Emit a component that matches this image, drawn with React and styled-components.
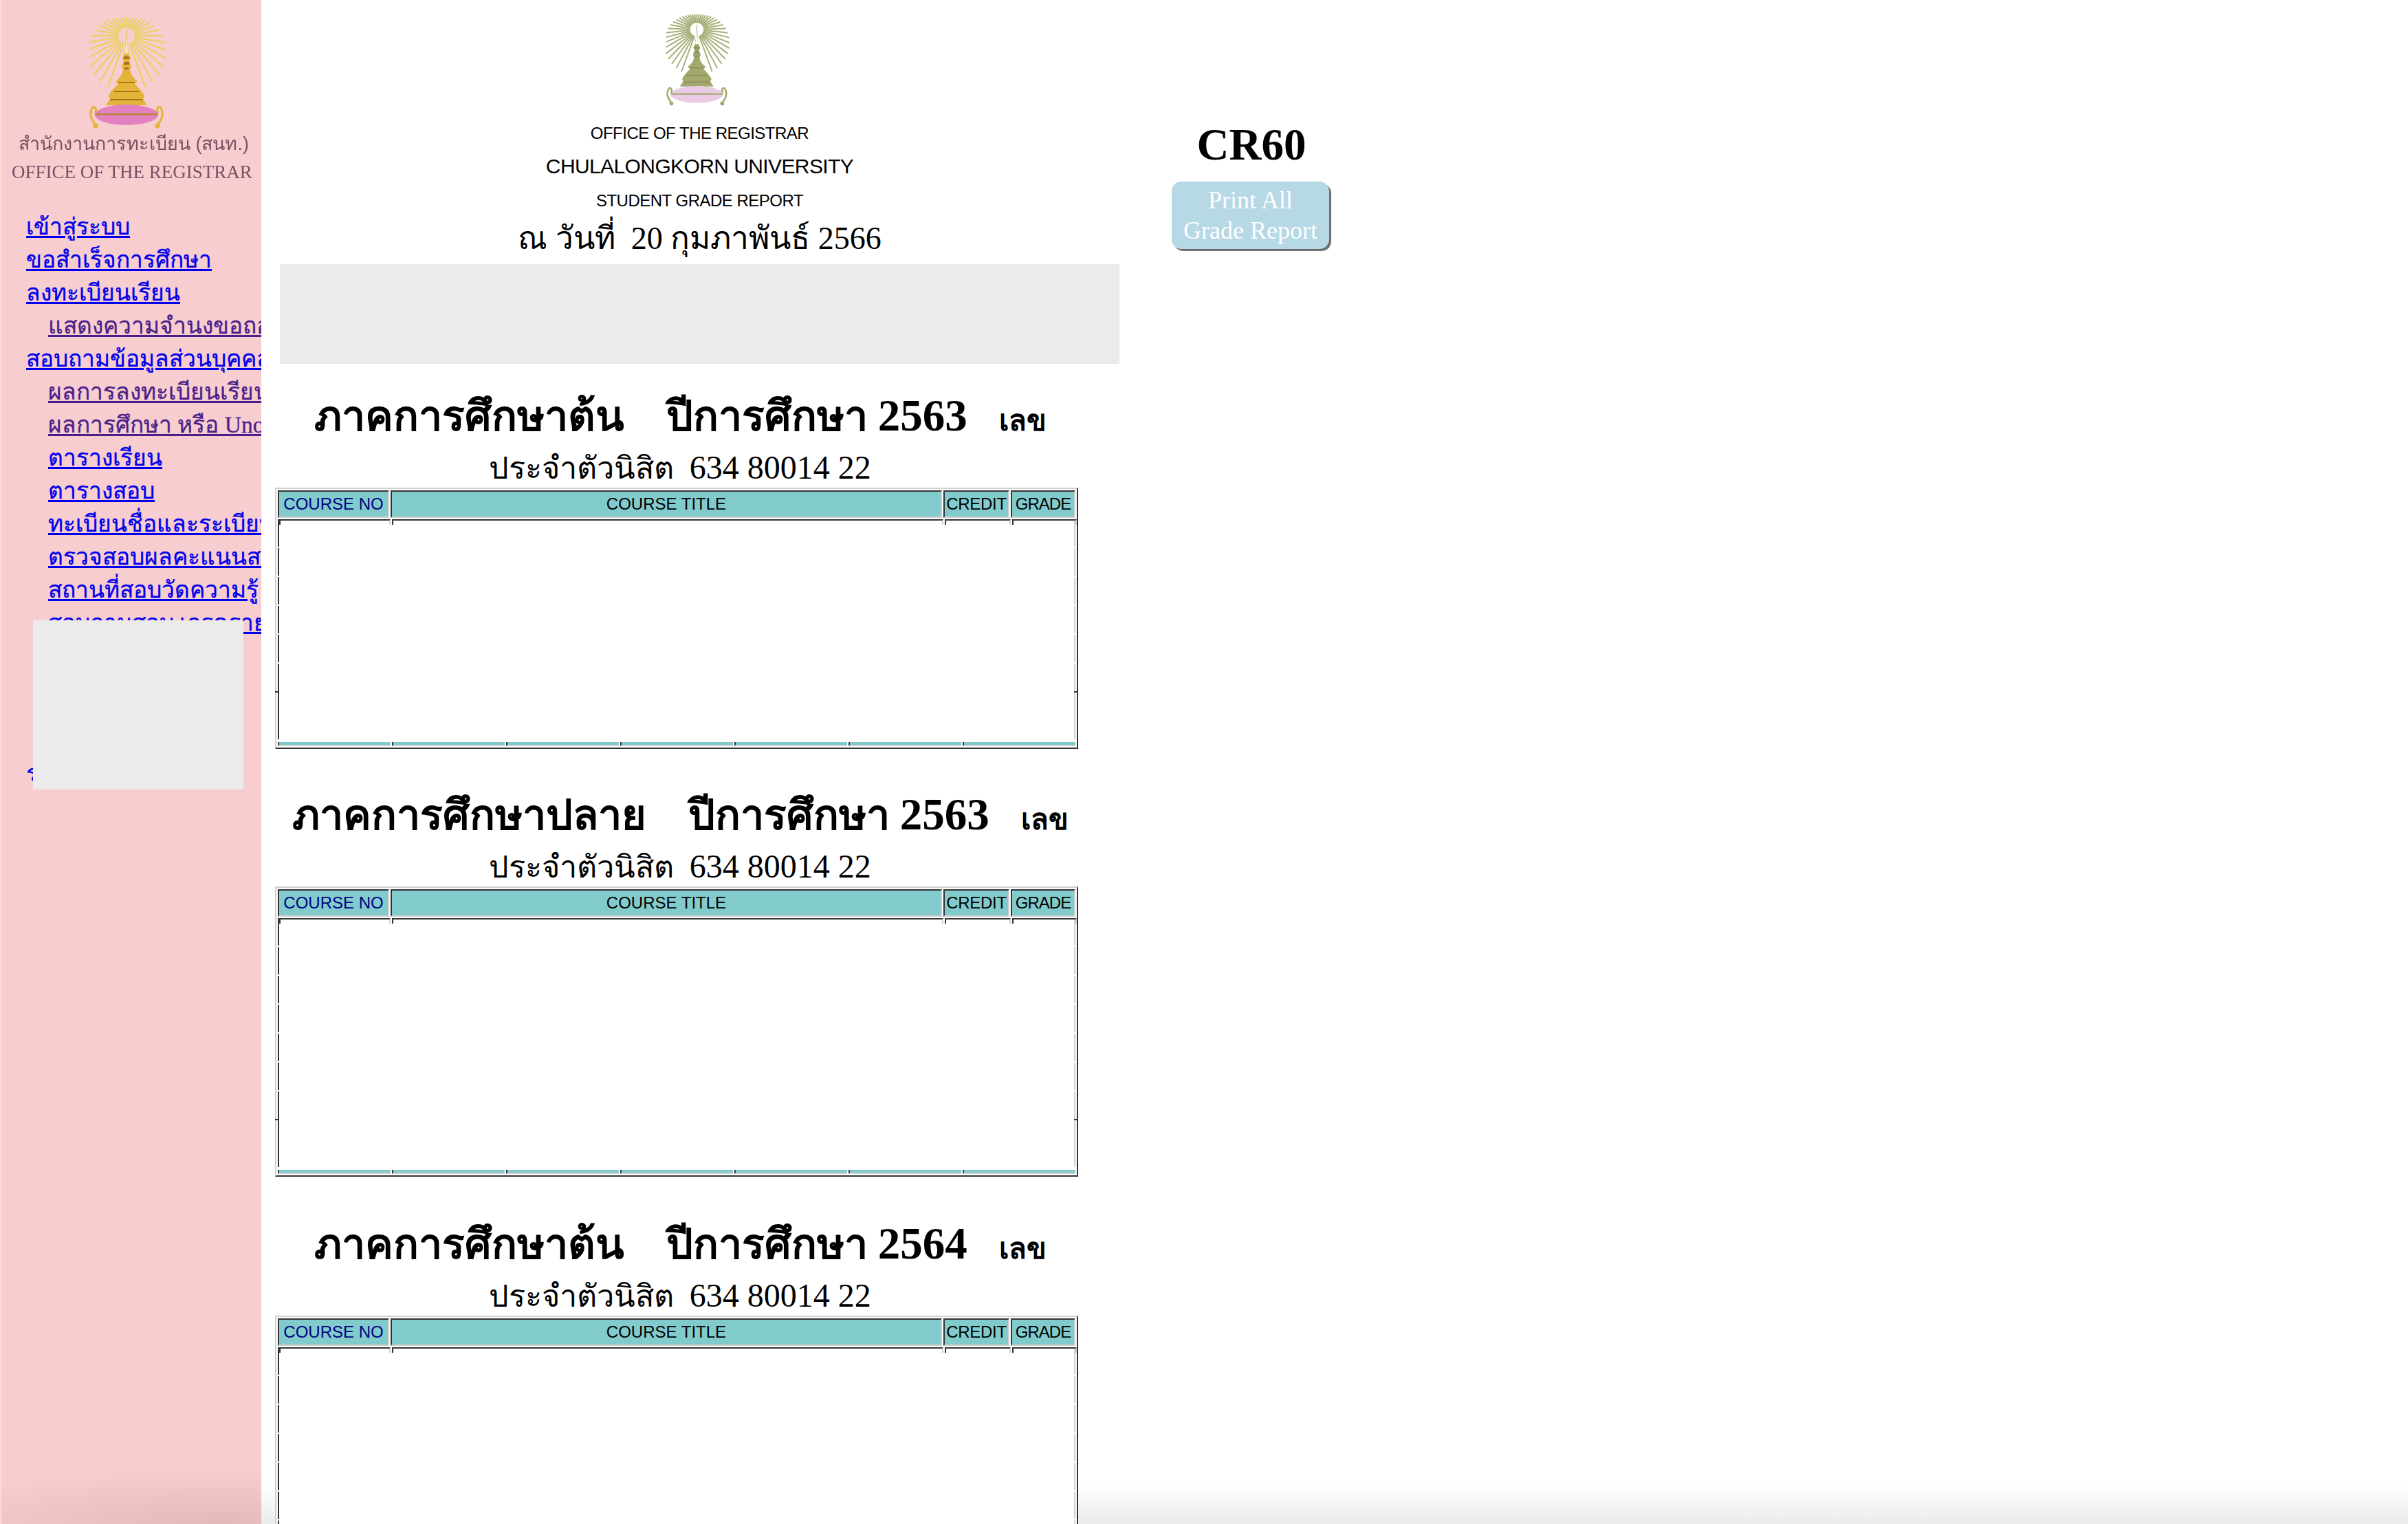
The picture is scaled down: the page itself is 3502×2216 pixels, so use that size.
import * as React from 'react'
import styled, { createGlobalStyle } from 'styled-components'

const serif = '"Liberation Serif", "Noto Sans", serif'
const sans = '"Liberation Sans", "Noto Sans", sans-serif'

const dark = '#333333'
const light = '#d0d0d0'
const teal = '#81cbcd'

const Global = createGlobalStyle`
  html, body {
    margin: 0;
    padding: 0;
    background: #ffffff;
  }
`

const Page = styled.div`
  display: flex;
  width: 3502px;
  height: 2216px;
  overflow: hidden;
  background: linear-gradient(to bottom, #ffffff 2160px, #ebebeb 2216px);
  font-family: ${serif};
  color: #000000;
`

const Sidebar = styled.nav`
  position: relative;
  flex: 0 0 380px;
  box-sizing: border-box;
  height: 2216px;
  overflow: hidden;
  padding-top: 22px;
  border-left: 2px solid #fadcd8;
  background:
    radial-gradient(ellipse 480px 80px at 85% 100%, rgba(120, 70, 70, 0.15), rgba(120, 70, 70, 0) 100%),
    #f7cdcf;
`

const SideLogo = styled.svg`
  display: block;
  width: 112px;
  height: 165px;
  margin-left: 128px;
`

const SideOffice = styled.div`
  margin: 4px 0 0 25px;
  font-size: 27px;
  line-height: 36px;
  font-family: ${sans};
  color: #7c4f63;
  white-space: nowrap;
  filter: blur(0.5px);
`

const SideOfficeEn = styled.div`
  margin: 8px 0 0 15px;
  font-size: 27px;
  line-height: 30px;
  color: #7c4f63;
  white-space: nowrap;
  filter: blur(0.5px);
`

const NavList = styled.div`
  display: flex;
  flex-direction: column;
  margin-top: 41px;
`

const NavLink = styled.a`
  display: block;
  height: 48px;
  padding-left: ${(p) => (p.$sub ? '68px' : '36px')};
  font-size: 33.5px;
  line-height: 48px;
  white-space: nowrap;
  text-decoration: underline;
  -webkit-text-stroke: 0.3px currentColor;
  color: ${(p) => (p.$visited ? '#4b1f8b' : '#0000ee')};
`

const StrayLink = styled.a`
  display: block;
  margin-top: 171px;
  padding-left: 36px;
  font-size: 33.5px;
  line-height: 48px;
  color: #0000ee;
  white-space: nowrap;
`

const SideMask = styled.div`
  position: absolute;
  left: 46px;
  top: 902px;
  width: 306px;
  height: 246px;
  background: #ebebeb;
`

const Report = styled.main`
  flex: 0 0 1320px;
`

const Header = styled.header`
  display: flex;
  flex-direction: column;
  align-items: center;
  width: 1221px;
  margin-left: 27px;
  padding-top: 18px;
`

const CrestWrap = styled.svg`
  display: block;
  width: 92px;
  height: 136px;
  margin-left: -6px;
`

const HeaderLine = styled.div`
  margin-top: ${(p) => p.$top}px;
  font-family: ${sans};
  font-size: ${(p) => p.$size}px;
  line-height: ${(p) => p.$size + 4}px;
  letter-spacing: ${(p) => p.$track}px;
  white-space: nowrap;
`

const DateLine = styled.div`
  margin: 11px 0 7px;
  font-size: 46px;
  line-height: 60px;
  white-space: nowrap;
`

const Redacted = styled.div`
  width: 1221px;
  height: 145px;
  margin: 0 0 0 27px;
  background: #ebebeb;
`

const Section = styled.section`
  width: 1178px;
  margin-left: 20px;
  margin-top: ${(p) => p.$top}px;
`

const Term = styled.h2`
  margin: 0;
  font-size: 61px;
  line-height: 76px;
  font-weight: bold;
  text-align: center;
  white-space: nowrap;
`

const TermYear = styled.span`
  font-size: 65px;
`

const TermSuffix = styled.span`
  font-size: 42px;
`

const StudentLine = styled.div`
  margin-bottom: -2px;
  font-size: 45px;
  line-height: 60px;
  text-align: center;
  white-space: nowrap;
`

const StudentNumber = styled.span`
  font-size: 48px;
`

const Frame = styled.div`
  display: flex;
  flex-direction: column;
  gap: 2px;
  box-sizing: border-box;
  width: 1168px;
  padding: 2px;
  border: 2px solid;
  border-color: ${light} ${dark} ${dark} ${light};
  background: #ffffff;
`

const columns = '162px 802px 96px 94px'

const HeadRow = styled.div`
  display: grid;
  grid-template-columns: ${columns};
  gap: 2px;
`

const HeadCell = styled.div`
  box-sizing: border-box;
  height: 40px;
  border: 2px solid;
  border-color: ${dark} ${light} ${light} ${dark};
  background: ${teal};
  font-family: ${sans};
  font-size: 24px;
  line-height: 36px;
  letter-spacing: ${(p) => p.$track || 0}px;
  text-align: center;
  white-space: nowrap;
  color: ${(p) => (p.$navy ? '#000080' : '#000000')};
`

const TickRow = styled.div`
  display: grid;
  grid-template-columns: ${columns};
  gap: 2px;
  margin: 0 -2px 0 -2px;
`

const TickCell = styled.div`
  box-sizing: border-box;
  height: 8px;
  border-top: 2px solid ${dark};
  border-left: 2px solid ${dark};
  border-right: 2px solid ${light};
`

const BlankRow = styled.div`
  box-sizing: border-box;
  height: 40px;
  padding: 0 2px;
  margin-bottom: 2px;
  border-left: 2px solid ${dark};
  border-right: 2px solid ${light};
`

const LastRow = styled(BlankRow)`
  position: relative;
  height: 68px;
  &::before,
  &::after {
    content: '';
    position: absolute;
    top: -2px;
    width: 6px;
    height: 2px;
    background: ${dark};
  }
  &::before {
    left: -6px;
  }
  &::after {
    right: -6px;
  }
`

const FootRow = styled.div`
  display: grid;
  grid-template-columns: repeat(7, 1fr);
  gap: 2px;
`

const FootCell = styled.div`
  box-sizing: border-box;
  height: 6px;
  border-bottom: 2px solid ${light};
  border-left: 2px solid ${dark};
  background: ${teal};
`

const Aside = styled.aside`
  display: flex;
  flex-direction: column;
  align-items: center;
  width: 232px;
  margin-left: 4px;
  padding-top: 173px;
`

const Code = styled.h1`
  margin: 0;
  font-size: 65px;
  line-height: 74px;
  font-weight: bold;
`

const PrintButton = styled.button`
  box-sizing: border-box;
  width: 229px;
  height: 98px;
  margin: 17px 3px 0 0;
  padding: 0;
  border: 0;
  border-radius: 14px;
  background: #b7d8e5;
  box-shadow: 3px 3px 0 #707070;
  font-family: ${serif};
  font-size: 36px;
  line-height: 44px;
  color: #ffffff;
  text-align: center;
`

const rays = (cx, cy, step) => {
  const items = []
  for (let deg = -160; deg <= 160; deg += step) {
    const a = (deg * Math.PI) / 180
    const dx = Math.sin(a)
    const dy = -Math.cos(a)
    // outer limit follows an egg shape around the spire
    const reach = 26 + 54 * Math.pow((1 - Math.cos(a)) / 2, 1.1)
    items.push(
      <line
        key={deg}
        x1={cx + dx * 13}
        y1={cy + dy * 13}
        x2={cx + dx * reach}
        y2={cy + dy * reach}
      />
    )
  }
  return items
}

function Crest({ as: Svg, palette }) {
  return (
    <Svg viewBox="0 0 112 165" role="img" aria-label="crest">
      <g stroke={palette.ray} strokeWidth="2.4" strokeLinecap="round">
        {rays(54, 30, palette.step)}
      </g>
      <path
        d="M54 16 C55 30 55.5 44 57 56 L60 62 L58 68 L61 74 L59 80 C60 86 64 92 70 96 L66 100 C72 106 78 112 80 118 L78 122 L84 131 H24 L30 122 L28 118 C30 112 36 106 42 100 L38 96 C44 92 48 86 49 80 L47 74 L50 68 L48 62 L51 56 C52.5 44 53 30 54 16 Z"
        fill={palette.spire}
      />
      <path d="M54 26 L55.5 44 L56.5 56 H51.5 L52.5 44 Z" fill={palette.inner} />
      <g fill={palette.shade}>
        <rect x="50" y="60" width="8" height="4" />
        <rect x="50" y="68" width="8" height="4" />
        <rect x="51" y="76" width="6" height="3" />
        <rect x="42" y="97" width="24" height="2" />
        <rect x="36" y="110" width="36" height="2" />
        <rect x="30" y="122" width="48" height="2" />
      </g>
      <ellipse cx="54" cy="145" rx="46" ry="15" fill={palette.cushion} />
      <rect x="8" y="143" width="92" height="2.5" fill={palette.band} />
      <g fill="none" stroke={palette.spire} strokeWidth="3">
        <path d="M8 158 C1 150 0 140 5 134 C9 132 11 138 8 142" />
        <path d="M100 158 C107 150 108 140 103 134 C99 132 97 138 100 142" />
      </g>
      <circle cx="9" cy="161" r="3.5" fill={palette.spire} />
      <circle cx="99" cy="161" r="3.5" fill={palette.spire} />
    </Svg>
  )
}

const goldPalette = {
  step: 10,
  ray: '#ecd06a',
  spire: '#e3b437',
  inner: '#f6e7a8',
  shade: '#a8741c',
  cushion: '#e481c0',
  band: '#b8863a',
}

const olivePalette = {
  step: 8,
  ray: '#a8ae78',
  spire: '#a3a96c',
  inner: '#ffffff',
  shade: '#8b915a',
  cushion: '#e9cbe6',
  band: '#a3a96c',
}

const navItems = [
  { label: 'เข้าสู่ระบบ' },
  { label: 'ขอสำเร็จการศึกษา' },
  { label: 'ลงทะเบียนเรียน' },
  { label: 'แสดงความจำนงขอถอนรายวิชา', sub: true, visited: true },
  { label: 'สอบถามข้อมูลส่วนบุคคล' },
  { label: 'ผลการลงทะเบียนเรียน', sub: true, visited: true },
  { label: 'ผลการศึกษา หรือ Unofficial Transcript', sub: true, visited: true },
  { label: 'ตารางเรียน', sub: true },
  { label: 'ตารางสอบ', sub: true },
  { label: 'ทะเบียนชื่อและระเบียบ', sub: true },
  { label: 'ตรวจสอบผลคะแนนสอบ', sub: true },
  { label: 'สถานที่สอบวัดความรู้', sub: true },
  { label: 'สอบถามสอบ เกรดรายวิชา', sub: true },
]

const sections = [
  { term: 'ภาคการศึกษาต้น', year: '2563', rows: 6, top: 37 },
  { term: 'ภาคการศึกษาปลาย', year: '2563', rows: 7, top: 57 },
  { term: 'ภาคการศึกษาต้น', year: '2564', rows: 7, top: 59 },
]

function GradeTable({ rows }) {
  return (
    <Frame>
      <HeadRow>
        <HeadCell $navy>COURSE NO</HeadCell>
        <HeadCell>COURSE TITLE</HeadCell>
        <HeadCell $track={-0.3}>CREDIT</HeadCell>
        <HeadCell $track={-1}>GRADE</HeadCell>
      </HeadRow>
      <div>
        {Array.from({ length: rows }).map((_, i) => (
          <BlankRow key={i}>
            {i === 0 && (
              <TickRow>
                <TickCell />
                <TickCell />
                <TickCell />
                <TickCell />
              </TickRow>
            )}
          </BlankRow>
        ))}
        <LastRow />
      </div>
      <FootRow>
        {Array.from({ length: 7 }).map((_, i) => (
          <FootCell key={i} />
        ))}
      </FootRow>
    </Frame>
  )
}

export default function App() {
  return (
    <Page>
      <Global />
      <Sidebar>
        <Crest as={SideLogo} palette={goldPalette} />
        <SideOffice>สำนักงานการทะเบียน (สนท.)</SideOffice>
        <SideOfficeEn>OFFICE OF THE REGISTRAR</SideOfficeEn>
        <NavList>
          {navItems.map((item) => (
            <NavLink key={item.label} $sub={item.sub} $visited={item.visited}>
              {item.label}
            </NavLink>
          ))}
          <StrayLink>ระบบ</StrayLink>
        </NavList>
        <SideMask />
      </Sidebar>
      <Report>
        <Header>
          <Crest as={CrestWrap} palette={olivePalette} />
          <HeaderLine $top={26} $size={24} $track={-0.5}>OFFICE OF THE REGISTRAR</HeaderLine>
          <HeaderLine $top={17} $size={30} $track={-0.6}>CHULALONGKORN UNIVERSITY</HeaderLine>
          <HeaderLine $top={19} $size={24} $track={-0.5}>STUDENT GRADE REPORT</HeaderLine>
          <DateLine>ณ วันที่&nbsp; 20 กุมภาพันธ์ 2566</DateLine>
        </Header>
        <Redacted />
        {sections.map((s, i) => (
          <Section key={i} $top={s.top}>
            <Term>
              {s.term}&nbsp;&nbsp;&nbsp;&nbsp;ปีการศึกษา <TermYear>{s.year}</TermYear>&nbsp;&nbsp;&nbsp;
              <TermSuffix>เลข</TermSuffix>
            </Term>
            <StudentLine>
              ประจำตัวนิสิต&nbsp; <StudentNumber>634 80014 22</StudentNumber>
            </StudentLine>
            <GradeTable rows={s.rows} />
          </Section>
        ))}
      </Report>
      <Aside>
        <Code>CR60</Code>
        <PrintButton>
          Print All
          <br />
          Grade Report
        </PrintButton>
      </Aside>
    </Page>
  )
}
